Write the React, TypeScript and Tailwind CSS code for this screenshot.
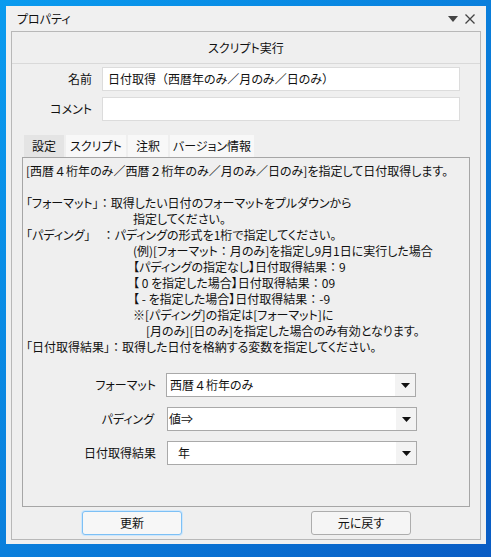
import React from "react";

const font = "font-['Noto_Sans_CJK_JP','Noto_Sans',sans-serif] [font-feature-settings:'palt']";

const FW = "：（）４２";

function T({ s }: { s: string }) {
  const parts: React.ReactNode[] = [];
  let buf = "";
  let k = 0;
  for (const ch of s) {
    if (FW.includes(ch)) {
      if (buf) parts.push(<React.Fragment key={k++}>{buf}</React.Fragment>);
      buf = "";
      parts.push(
        <span key={k++} className="[font-feature-settings:normal]">
          {ch}
        </span>
      );
    } else buf += ch;
  }
  if (buf) parts.push(<React.Fragment key={k++}>{buf}</React.Fragment>);
  return <>{parts}</>;
}

function Arrow() {
  return (
    <svg width="9" height="5" viewBox="0 0 9 5">
      <path d="M0 0 H9 L4.5 5 Z" fill="#111" />
    </svg>
  );
}

function Select({ value, pad }: { value: string; pad: string }) {
  return (
    <div className="w-[250px] h-[24px] border border-[#a9a9a9] bg-white flex items-stretch">
      <div className={`flex-1 flex items-center text-[12px] text-[#111] ${pad}`}>
        <T s={value} />
      </div>
      <div className="w-[20px] bg-[#f3f3f3] flex items-center justify-center">
        <Arrow />
      </div>
    </div>
  );
}

const lines: { t: string; indent?: string }[] = [
  { t: "[西暦４桁年のみ／西暦２桁年のみ／月のみ／日のみ]を指定して日付取得します。" },
  { t: "\u00a0" },
  { t: "「フォーマット」：取得したい日付のフォーマットをプルダウンから" },
  { t: "指定してください。", indent: "pl-[107px]" },
  { t: "「パディング」\u3000：パディングの形式を1桁で指定してください。" },
  { t: "(例)[フォーマット：月のみ]を指定し9月1日に実行した場合", indent: "pl-[107px]" },
  { t: "【パディングの指定なし】日付取得結果：9", indent: "pl-[107px]" },
  { t: "【 0 を指定した場合】日付取得結果：09", indent: "pl-[107px]" },
  { t: "【 - を指定した場合】日付取得結果：-9", indent: "pl-[107px]" },
  { t: "※[パディング]の指定は[フォーマット]に", indent: "pl-[107px]" },
  { t: "[月のみ][日のみ]を指定した場合のみ有効となります。", indent: "pl-[120px]" },
  { t: "「日付取得結果」：取得した日付を格納する変数を指定してください。" },
];

export default function App() {
  return (
    <div className={`w-[491px] h-[557px] overflow-hidden bg-gradient-to-br from-[#0a9bef] via-[#0a7fdc] to-[#0a5cc4] pl-[6px] pt-[6px] ${font} text-[#111]`}>
      <div className="w-[480px] h-[538px] bg-[#f0f0f0] flex flex-col">
        {/* title bar */}
        <div className="h-[25px] flex items-center pl-[11px] pr-[11px]">
          <span className="text-[12px] flex-1">プロパティ</span>
          <svg width="10" height="6" viewBox="0 0 10 6" className="mr-[7px]">
            <path d="M0 0 H10 L5 6 Z" fill="#444" />
          </svg>
          <svg width="10" height="10" viewBox="0 0 10 10">
            <path d="M0.5 0.5 L9.5 9.5 M9.5 0.5 L0.5 9.5" stroke="#444" strokeWidth="1.3" />
          </svg>
        </div>
        {/* main panel */}
        <div className="ml-[5px] w-[470px] h-[509px] border border-[#b8b8b8] bg-[#efefef] flex flex-col">
          <div className="h-[32px] border-b border-[#d9d9d9] flex items-center justify-center text-[12px]">
            スクリプト実行
          </div>
          <div className="flex items-center mt-[3px]">
            <div className="w-[80px] text-right text-[12px]">名前</div>
            <div className="ml-[10px] w-[358px] h-[24px] border border-[#dcdcdc] bg-white flex items-center pl-[5px] text-[12px]">
              <T s="日付取得（西暦年のみ／月のみ／日のみ）" />
            </div>
          </div>
          <div className="flex items-center mt-[6px]">
            <div className="w-[80px] text-right text-[12px]">コメント</div>
            <div className="ml-[10px] w-[358px] h-[24px] border border-[#dcdcdc] bg-white" />
          </div>
          {/* tabs */}
          <div className="mt-[14px] ml-[12px] flex items-end h-[22px] text-[12px]">
            <div className="w-[40px] h-[22px] bg-[#e4e4e4] flex items-center justify-center">設定</div>
            <div className="ml-[2px] w-[60px] h-[22px] bg-[#f8f8f8] flex items-center justify-center">スクリプト</div>
            <div className="ml-[2px] w-[40px] h-[22px] bg-[#f8f8f8] flex items-center justify-center">注釈</div>
            <div className="ml-[2px] w-[84px] h-[22px] bg-[#f8f8f8] flex items-center justify-center">バージョン情報</div>
          </div>
          <div className="ml-[10px] w-[448px] h-[350px] border border-[#a6a6a6] bg-[#efefef] flex flex-col">
            <div className="pt-[5px] pl-[3px] text-[12px] leading-[16px] whitespace-pre">
              {lines.map((l, i) => (
                <div key={i} className={l.indent ?? ""}>
                  <T s={l.t} />
                </div>
              ))}
            </div>
            <div className="mt-[18px] flex flex-col gap-[10px] text-[12px]">
              <div className="flex items-center">
                <div className="w-[133px] text-right">フォーマット</div>
                <div className="ml-[10px]"><Select value="西暦４桁年のみ" pad="pl-[3px]" /></div>
              </div>
              <div className="flex items-center">
                <div className="w-[131px] text-right">パディング</div>
                <div className="ml-[13px]"><Select value="値⇒" pad="pl-[1px]" /></div>
              </div>
              <div className="flex items-center">
                <div className="w-[133px] text-right">日付取得結果</div>
                <div className="ml-[11px]"><Select value="年" pad="pl-[10px]" /></div>
              </div>
            </div>
          </div>
          {/* buttons */}
          <div className="flex mt-[4px]">
            <div className="ml-[70px] w-[100px] h-[24px] rounded-[3px] border border-[#7dc0f5] bg-[#f7f7f7] flex items-center justify-center text-[12px] shadow-[0_0_0_1px_#cfe7fb]">
              更新
            </div>
            <div className="ml-[129px] w-[100px] h-[24px] rounded-[3px] border border-[#adadad] bg-[#f5f5f5] flex items-center justify-center text-[12px]">
              元に戻す
            </div>
          </div>
        </div>
      </div>
    </div>
  );
}
